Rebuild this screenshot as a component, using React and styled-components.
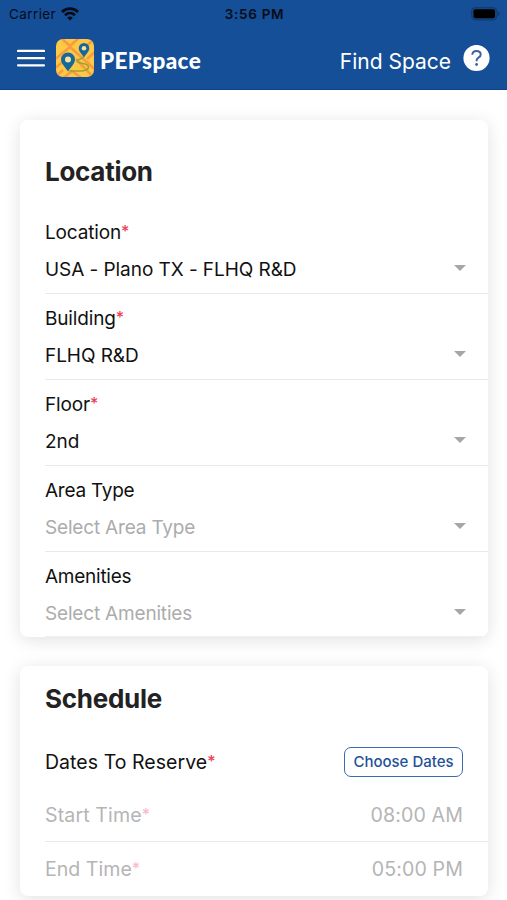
import React from 'react';
import styled, { createGlobalStyle } from 'styled-components';

const GlobalStyle = createGlobalStyle`
  * {
    box-sizing: border-box;
  }
  body {
    margin: 0;
    background: #fff;
    overflow: hidden;
    font-family: Inter, "Liberation Sans", sans-serif;
  }
`;

const Screen = styled.div`
  height: 900px;
  overflow: hidden;
`;

const Header = styled.header`
  height: 90px;
  background: #154f97;
  border-bottom: 1px solid #0f428c;
`;

const StatusBar = styled.div`
  display: grid;
  grid-template-columns: 1fr auto 1fr;
  align-items: center;
  height: 28px;
  padding: 0 7px 0 9px;
  color: #050c18;
  font-size: 13.5px;
`;

const Carrier = styled.div`
  display: flex;
  align-items: center;
  gap: 5px;
  letter-spacing: 0.4px;
`;

const Clock = styled.div`
  font-weight: 600;
  letter-spacing: 0.7px;
`;

const Battery = styled.svg`
  justify-self: end;
`;

const NavBar = styled.div`
  display: flex;
  align-items: center;
  height: 60px;
  padding: 0 17px;
  color: #fff;
`;

const Logo = styled.svg`
  margin-left: 11px;
`;

const Brand = styled.div`
  margin: 5px 0 0 6px;
  font: 900 22.5px/24px Lato, sans-serif;
  letter-spacing: 0.4px;
`;

const FindSpace = styled.div`
  margin: 8px 12px 0 auto;
  font-size: 21px;
  line-height: 26px;
`;

const Content = styled.main`
  display: flex;
  flex-direction: column;
  gap: 29px;
  padding: 30px 19px 0 20px;
`;

const Card = styled.section`
  padding: ${(p) => p.$top}px 0 0 25px;
  border-radius: 8px;
  background: #fff;
  box-shadow: 0 3px 18px rgba(0, 0, 0, 0.12);
  overflow: hidden;
`;

const Heading = styled.h2`
  margin: 0;
  color: #222;
  font-size: 26px;
  font-weight: 700;
  line-height: 32px;
  letter-spacing: -0.28px;
`;

const Fields = styled.div`
  margin-top: 20px;
`;

const Field = styled.div`
  height: 86px;
  padding: 12px 20px 0 0;
  border-bottom: 1px solid #e9e9e9;
  &:last-child {
    height: 85px;
    border-color: #f0f0f0;
  }
`;

const Label = styled.div`
  color: ${(p) => (p.$muted ? '#b5b5b5' : '#111')};
  font-size: ${(p) => p.$size || 19}px;
  line-height: 26px;
  letter-spacing: ${(p) => p.$track || 0}px;
`;

const Star = styled.span`
  color: ${(p) => (p.$muted ? '#f8bcc6' : '#ee3d57')};
  font-size: 16px;
  font-weight: 500;
  line-height: 0;
  letter-spacing: 0;
  vertical-align: 2px;
`;

const Select = styled.div`
  display: flex;
  align-items: center;
  justify-content: space-between;
  height: 26px;
  margin-top: 10px;
  color: ${(p) => (p.$empty ? '#acacac' : '#111')};
  font-size: 19px;
  letter-spacing: ${(p) => (p.$empty ? -0.18 : -0.06)}px;
`;

const Caret = styled.span`
  margin: -3px 2px 0 0;
  border: 6px solid transparent;
  border-top-color: #a6a6a6;
  border-bottom: 0;
`;

const Row = styled.div`
  display: flex;
  align-items: center;
  justify-content: space-between;
  height: 54px;
  padding-right: 25px;
`;

const DatesRow = styled(Row)`
  height: 73px;
  padding-top: 20px;
`;

const StartRow = styled(Row)`
  padding-top: 1px;
  border-bottom: 1px solid #e9e9e9;
`;

const Time = styled.div`
  color: #b5b5b5;
  font-size: 19.6px;
  letter-spacing: 0.1px;
`;

const DateButton = styled.button`
  width: 119px;
  height: 30px;
  padding: 0;
  border: 1.5px solid #3a6bad;
  border-radius: 7px;
  background: #fff;
  color: #245296;
  font: 500 15px/26px Inter, sans-serif;
  white-space: nowrap;
`;

const fields = [
  { label: 'Location', value: 'USA - Plano TX - FLHQ R&D', required: true },
  { label: 'Building', value: 'FLHQ R&D', required: true },
  { label: 'Floor', value: '2nd', required: true },
  { label: 'Area Type', placeholder: 'Select Area Type' },
  { label: 'Amenities', placeholder: 'Select Amenities' },
];

const WifiIcon = () => (
  <svg width="18" height="14" viewBox="0 0 18 14" fill="none" stroke="#050c18" strokeWidth="2.8">
    <path d="M1 4.9C5.6.6 12.4.6 17 4.9" />
    <path d="M4 8.2c2.9-2.7 7.1-2.7 10 0" />
    <path d="M9 13.5 6.2 10.7c1.5-1.5 4.1-1.5 5.6 0z" fill="#050c18" stroke="none" />
  </svg>
);

const BatteryIcon = () => (
  <Battery width="29" height="14" viewBox="0 0 29 14">
    <rect x="0.5" y="0.5" width="25.5" height="12.5" rx="4" fill="#15447f" stroke="#113b73" />
    <rect x="2.5" y="2.3" width="21.5" height="9" rx="2" fill="#000" />
    <path d="M27 4.5c2 .7 2 3.8 0 4.5z" fill="#113b73" />
  </Battery>
);

const MenuIcon = () => (
  <svg width="28" height="20" viewBox="0 0 28 20" stroke="#fff" strokeWidth="2.2" strokeLinecap="round">
    <path d="M1 2.9h26M1 10.1h26M1 17.3h26" />
  </svg>
);

const MapLogo = () => (
  <Logo width="38" height="38" viewBox="0 0 38 38">
    <defs>
      <clipPath id="tile">
        <rect width="38" height="38" rx="7" />
      </clipPath>
    </defs>
    <g clipPath="url(#tile)" fill="none">
      <rect width="38" height="38" fill="#fdc846" />
      <g stroke="#f79c40" strokeWidth="2.6" strokeLinejoin="round">
        <path d="M3-3l11 10L25-3M-2 21 14 8l28 25M-2 30l10-8M-2 39l9-8M5 41l11-9 12 9M20 20l20 21M24 13 38 0M31 20l9-8" />
      </g>
      <path d="M27.5 18c-2 3-6.5 1.5-6.5 4 0 3 11.5 1.5 11.5 6 0 5-11 4-19 4" stroke="#9aa336" strokeWidth="1.6" />
      <g fill="#14689a">
        <path d="M12 13.5a7 7 0 0 0-7 7c0 4 4.5 8 7 12 2.5-4 7-8 7-12a7 7 0 0 0-7-7z" />
        <path d="M28 4a5.3 5.3 0 0 0-5.3 5.3c0 3 3.3 6 5.3 9.2 2-3.2 5.3-6.2 5.3-9.2A5.3 5.3 0 0 0 28 4z" />
      </g>
      <circle cx="12" cy="20.4" r="3" fill="#fbe0a0" />
      <circle cx="28" cy="9.3" r="2.3" fill="#fbe0a0" />
    </g>
  </Logo>
);

const HelpIcon = () => (
  <svg width="27" height="27" viewBox="0 0 27 27" fill="none">
    <circle cx="13.5" cy="13" r="13.1" fill="#fff" />
    <path d="M9.3 9.7c.1-2.5 1.9-3.8 4.2-3.8 2.4 0 4.2 1.4 4.2 3.5 0 1.7-.9 2.5-2.2 3.3-1.4.9-1.9 1.6-1.9 2.9v.7" stroke="#37669f" strokeWidth="2" />
    <circle cx="13.6" cy="19.5" r="1.4" fill="#37669f" />
  </svg>
);

const App = () => (
  <Screen>
    <GlobalStyle />
    <Header>
      <StatusBar>
        <Carrier>
          Carrier
          <WifiIcon />
        </Carrier>
        <Clock>3:56 PM</Clock>
        <BatteryIcon />
      </StatusBar>
      <NavBar>
        <MenuIcon />
        <MapLogo />
        <Brand>PEPspace</Brand>
        <FindSpace>Find Space</FindSpace>
        <HelpIcon />
      </NavBar>
    </Header>
    <Content>
      <Card $top={36}>
        <Heading>Location</Heading>
        <Fields>
          {fields.map((f) => (
            <Field key={f.label}>
              <Label $track={f.required ? -0.15 : -0.25}>
                {f.label}
                {f.required && <Star>*</Star>}
              </Label>
              <Select $empty={!f.value}>
                {f.value || f.placeholder}
                <Caret />
              </Select>
            </Field>
          ))}
        </Fields>
      </Card>
      <Card $top={17}>
        <Heading>Schedule</Heading>
        <DatesRow>
          <Label $size={19.5} $track={0.05}>
            Dates To Reserve<Star>*</Star>
          </Label>
          <DateButton>Choose Dates</DateButton>
        </DatesRow>
        <StartRow>
          <Label $muted $size={19.6} $track={0.1}>
            Start Time<Star $muted>*</Star>
          </Label>
          <Time>08:00 AM</Time>
        </StartRow>
        <Row>
          <Label $muted $size={19.6}>
            End Time<Star $muted>*</Star>
          </Label>
          <Time>05:00 PM</Time>
        </Row>
      </Card>
    </Content>
  </Screen>
);

export default App;
